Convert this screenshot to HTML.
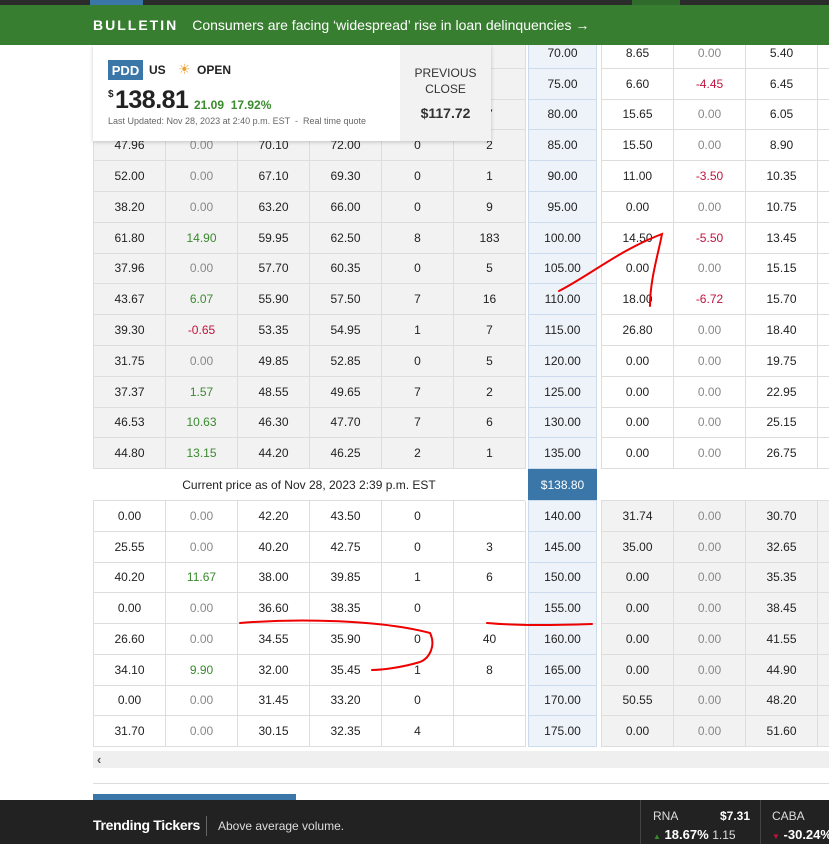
<!DOCTYPE html>
<html><head><meta charset="utf-8"><style>
*{box-sizing:border-box;margin:0;padding:0}
body{width:829px;height:844px;overflow:hidden;background:#fff;font-family:"Liberation Sans",sans-serif;color:#222;position:relative}
.abs{position:absolute}
.g{display:grid;position:absolute}
.g div{display:flex;align-items:center;justify-content:center;font-size:12px;border-right:1px solid #ddd;border-bottom:1px solid #ddd}
.gr{background:#f2f2f2}
.c{color:#888}.gn{color:#3a8a2e}.rd{color:#c0143c}
.strike div{background:#eef3f9;border-right:1px solid #cddcec;border-left:1px solid #cddcec;border-bottom:1px solid #cddcec}
</style></head><body>

<!-- top left table -->
<div class="g gr" style="left:93px;top:38px;width:432px;grid-template-columns:repeat(6,72px);grid-auto-rows:30.8px;border-left:1px solid #ddd">
<div></div><div></div><div></div><div></div><div></div><div></div>
<div></div><div></div><div></div><div></div><div></div><div></div>
<div></div><div></div><div></div><div></div><div></div><div>7</div>
<div>47.96</div><div class="c">0.00</div><div>70.10</div><div>72.00</div><div>0</div><div>2</div>
<div>52.00</div><div class="c">0.00</div><div>67.10</div><div>69.30</div><div>0</div><div>1</div>
<div>38.20</div><div class="c">0.00</div><div>63.20</div><div>66.00</div><div>0</div><div>9</div>
<div>61.80</div><div class="gn">14.90</div><div>59.95</div><div>62.50</div><div>8</div><div>183</div>
<div>37.96</div><div class="c">0.00</div><div>57.70</div><div>60.35</div><div>0</div><div>5</div>
<div>43.67</div><div class="gn">6.07</div><div>55.90</div><div>57.50</div><div>7</div><div>16</div>
<div>39.30</div><div class="rd">-0.65</div><div>53.35</div><div>54.95</div><div>1</div><div>7</div>
<div>31.75</div><div class="c">0.00</div><div>49.85</div><div>52.85</div><div>0</div><div>5</div>
<div>37.37</div><div class="gn">1.57</div><div>48.55</div><div>49.65</div><div>7</div><div>2</div>
<div>46.53</div><div class="gn">10.63</div><div>46.30</div><div>47.70</div><div>7</div><div>6</div>
<div>44.80</div><div class="gn">13.15</div><div>44.20</div><div>46.25</div><div>2</div><div>1</div>
</div>
<div class="g strike" style="left:528px;top:38px;width:69px;grid-template-columns:69px;grid-auto-rows:30.8px">
<div>70.00</div><div>75.00</div><div>80.00</div><div>85.00</div><div>90.00</div><div>95.00</div><div>100.00</div><div>105.00</div><div>110.00</div><div>115.00</div><div>120.00</div><div>125.00</div><div>130.00</div><div>135.00</div>
</div>
<div class="g" style="left:601px;top:38px;width:228px;grid-template-columns:72px 72px 72px 12px;grid-auto-rows:30.8px;border-left:1px solid #ddd">
<div>8.65</div><div class="c">0.00</div><div>5.40</div><div></div>
<div>6.60</div><div class="rd">-4.45</div><div>6.45</div><div></div>
<div>15.65</div><div class="c">0.00</div><div>6.05</div><div></div>
<div>15.50</div><div class="c">0.00</div><div>8.90</div><div></div>
<div>11.00</div><div class="rd">-3.50</div><div>10.35</div><div></div>
<div>0.00</div><div class="c">0.00</div><div>10.75</div><div></div>
<div>14.50</div><div class="rd">-5.50</div><div>13.45</div><div></div>
<div>0.00</div><div class="c">0.00</div><div>15.15</div><div></div>
<div>18.00</div><div class="rd">-6.72</div><div>15.70</div><div></div>
<div>26.80</div><div class="c">0.00</div><div>18.40</div><div></div>
<div>0.00</div><div class="c">0.00</div><div>19.75</div><div></div>
<div>0.00</div><div class="c">0.00</div><div>22.95</div><div></div>
<div>0.00</div><div class="c">0.00</div><div>25.15</div><div></div>
<div>0.00</div><div class="c">0.00</div><div>26.75</div><div></div>
</div>

<!-- banner (above table) -->
<div class="abs" style="left:0;top:0;width:829px;height:5px;background:#2b2b2b;z-index:5"></div>
<div class="abs" style="left:90px;top:0;width:53px;height:5px;background:#3a76a8;z-index:6"></div>
<div class="abs" style="left:632px;top:0;width:48px;height:5px;background:#2f6b2a;z-index:6"></div>
<div class="abs" style="left:0;top:5px;width:829px;height:40px;background:#377e30;color:#fff;display:flex;align-items:center;padding-left:93px;z-index:5">
<span style="font-weight:bold;letter-spacing:2px;font-size:14px">BULLETIN</span><span style="margin-left:14px;font-size:14px">Consumers are facing ‘widespread’ rise in loan delinquencies →</span></div>

<!-- current price row -->
<div class="abs" style="left:93px;top:469px;width:432px;height:31px;display:flex;align-items:center;justify-content:center;font-size:12px">Current price as of Nov 28, 2023 2:39 p.m. EST</div>
<div class="abs" style="left:528px;top:469px;width:69px;height:31px;background:#3a76a8;color:#fff;display:flex;align-items:center;justify-content:center;font-size:12px">$138.80</div>

<!-- bottom -->
<div class="g" style="left:93px;top:500px;width:432px;grid-template-columns:repeat(6,72px);grid-auto-rows:30.75px;border-left:1px solid #ddd;border-top:1px solid #ddd">
<div>0.00</div><div class="c">0.00</div><div>42.20</div><div>43.50</div><div>0</div><div></div>
<div>25.55</div><div class="c">0.00</div><div>40.20</div><div>42.75</div><div>0</div><div>3</div>
<div>40.20</div><div class="gn">11.67</div><div>38.00</div><div>39.85</div><div>1</div><div>6</div>
<div>0.00</div><div class="c">0.00</div><div>36.60</div><div>38.35</div><div>0</div><div></div>
<div>26.60</div><div class="c">0.00</div><div>34.55</div><div>35.90</div><div>0</div><div>40</div>
<div>34.10</div><div class="gn">9.90</div><div>32.00</div><div>35.45</div><div>1</div><div>8</div>
<div>0.00</div><div class="c">0.00</div><div>31.45</div><div>33.20</div><div>0</div><div></div>
<div>31.70</div><div class="c">0.00</div><div>30.15</div><div>32.35</div><div>4</div><div></div>
</div>
<div class="g strike" style="left:528px;top:500px;width:69px;grid-template-columns:69px;grid-auto-rows:30.75px;border-top:1px solid #cddcec">
<div>140.00</div><div>145.00</div><div>150.00</div><div>155.00</div><div>160.00</div><div>165.00</div><div>170.00</div><div>175.00</div>
</div>
<div class="g gr" style="left:601px;top:500px;width:228px;grid-template-columns:72px 72px 72px 12px;grid-auto-rows:30.75px;border-left:1px solid #ddd;border-top:1px solid #ddd">
<div>31.74</div><div class="c">0.00</div><div>30.70</div><div></div>
<div>35.00</div><div class="c">0.00</div><div>32.65</div><div></div>
<div>0.00</div><div class="c">0.00</div><div>35.35</div><div></div>
<div>0.00</div><div class="c">0.00</div><div>38.45</div><div></div>
<div>0.00</div><div class="c">0.00</div><div>41.55</div><div></div>
<div>0.00</div><div class="c">0.00</div><div>44.90</div><div></div>
<div>50.55</div><div class="c">0.00</div><div>48.20</div><div></div>
<div>0.00</div><div class="c">0.00</div><div>51.60</div><div></div>
</div>

<!-- scrollbar -->
<div class="abs" style="left:93px;top:751px;width:736px;height:17px;background:#efefef;font-size:13px;color:#555;padding-left:4px;line-height:17px;font-weight:bold">‹</div>
<div class="abs" style="left:93px;top:783px;width:736px;height:1px;background:#ddd"></div>
<div class="abs" style="left:93px;top:794px;width:203px;height:6px;background:#3a76a8"></div>

<!-- footer -->
<div class="abs" style="left:0;top:800px;width:829px;height:44px;background:#222;color:#fff">
<div class="abs" style="left:93px;top:17px;font-size:14px;font-weight:bold;letter-spacing:-0.3px">Trending Tickers</div>
<div class="abs" style="left:206px;top:16px;width:1px;height:20px;background:#666"></div>
<div class="abs" style="left:218px;top:19px;font-size:12px;color:#ddd">Above average volume.</div>
<div class="abs" style="left:640px;top:0;width:1px;height:44px;background:#444"></div>
<div class="abs" style="left:653px;top:9px;font-size:12px;color:#ddd">RNA</div>
<div class="abs" style="left:720px;top:9px;font-size:12px;font-weight:bold">$7.31</div>
<div class="abs" style="left:653px;top:27px;font-size:13px;font-weight:bold"><span style="color:#3a8a2e;font-size:8px">▲</span> 18.67% <span style="font-weight:normal;font-size:12px;color:#ddd">1.15</span></div>
<div class="abs" style="left:760px;top:0;width:1px;height:44px;background:#444"></div>
<div class="abs" style="left:772px;top:9px;font-size:12px;color:#ddd">CABA</div>
<div class="abs" style="left:772px;top:27px;font-size:13px;font-weight:bold;white-space:nowrap"><span style="color:#c0143c;font-size:8px">▼</span> -30.24%</div>
</div>

<!-- quote card -->
<div class="abs" style="left:93px;top:45px;width:398px;height:96px;background:#fff;box-shadow:0 1px 4px rgba(0,0,0,.2);z-index:7">
<div class="abs" style="left:15px;top:15px;width:35px;height:20px;background:#3a76a8;color:#fff;font-size:13px;font-weight:bold;display:flex;align-items:center;justify-content:center">PDD</div>
<div class="abs" style="left:56px;top:18px;font-size:12px;font-weight:bold">US</div>
<div class="abs" style="left:85px;top:16px;font-size:14px;color:#f0a030">☀</div>
<div class="abs" style="left:104px;top:18px;font-size:12px;font-weight:bold">OPEN</div>
<div class="abs" style="left:15px;top:44px;font-size:10px;font-weight:bold">$</div>
<div class="abs" style="left:22px;top:41px;font-size:25px;font-weight:bold;letter-spacing:-0.5px">138.81</div>
<div class="abs" style="left:101px;top:53px;font-size:12px;font-weight:bold;color:#3a8a2e">21.09 &nbsp;17.92%</div>
<div class="abs" style="left:15px;top:71px;font-size:9px;color:#666;white-space:nowrap">Last Updated: Nov 28, 2023 at 2:40 p.m. EST &nbsp;- &nbsp;Real time quote</div>
<div class="abs" style="left:307px;top:0;width:91px;height:96px;background:#f2f2f2;text-align:center">
<div style="margin-top:20px;font-size:12px;line-height:16px;color:#333">PREVIOUS<br>CLOSE</div>
<div style="margin-top:8px;font-size:14px;font-weight:bold;color:#333">$117.72</div></div>
</div>

<svg class="abs" style="left:0;top:0;z-index:8" width="829" height="844">
<g fill="none" stroke="#e00" stroke-width="2" stroke-linecap="round">
<path d="M559,291 C590,275 620,250 662,234 C658,255 650,280 650,306"/>
<path d="M240,623 C300,618 380,620 430,633 C436,645 430,658 420,662 C400,668 380,670 372,670"/>
<path d="M487,623 C520,626 560,625 592,624"/>
</g></svg>
</body></html>
